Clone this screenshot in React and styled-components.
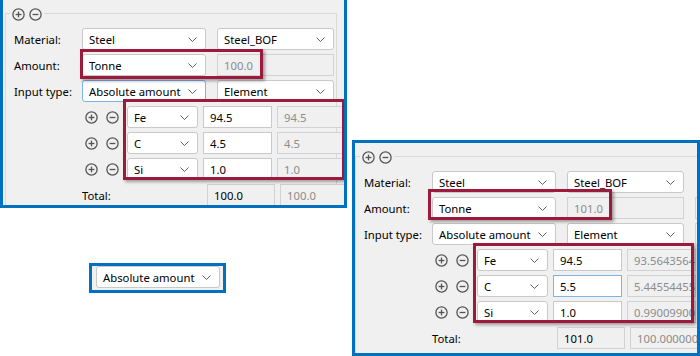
import React from "react";
import styled, { createGlobalStyle, css } from "styled-components";

const GlobalStyle = createGlobalStyle`
  html, body {
    margin: 0;
    padding: 0;
    background: #ffffff;
  }
  body {
    font-family: "Segoe UI", "Noto Sans", sans-serif;
    font-size: 11.3px;
    color: #000000;
  }
`;

const colors = {
  blue: "#0070c0",
  red: "#9c1a3c",
  panel: "#f0f0f0",
  line: "#d9d9d9",
  field: "#c9c9c9",
  disabledText: "#8c8c8c",
  focus: "#7fb2e5",
  icon: "#555555"
};

const Canvas = styled.div`
  display: flex;
  align-items: flex-start;
  width: 700px;
  height: 356px;
  overflow: hidden;
`;

const LeftColumn = styled.div`
  display: flex;
  flex-direction: column;
  width: 352px;
  flex-shrink: 0;
`;

const Panel = styled.div`
  position: relative;
  box-sizing: border-box;
  width: ${p => p.$width}px;
  height: ${p => p.$height}px;
  margin-top: ${p => p.$top}px;
  border: 3px solid ${colors.blue};
  background: ${colors.panel};
  overflow: hidden;
  padding-left: ${p => p.$inset}px;
  padding-top: 13px;
  flex-shrink: 0;
`;

const GroupBox = styled.div`
  box-sizing: border-box;
  width: ${p => p.$width}px;
  height: 260px;
  border: 1px solid ${colors.line};
  border-bottom: none;
`;

const Legend = styled.div`
  display: flex;
  gap: 4px;
  width: max-content;
  margin: -6px 0 0 4px;
  padding: 0 2px;
  background: ${colors.panel};
`;

const Form = styled.div`
  display: flex;
  flex-direction: column;
  gap: 4px;
  margin-top: 7px;
  padding-left: 8px;
`;

const Row = styled.div`
  display: flex;
  align-items: center;
  height: 22px;
  padding-left: ${p => p.$indent || 0}px;
`;

const Label = styled.span`
  width: ${p => p.$width || 68}px;
  flex-shrink: 0;
  white-space: nowrap;
`;

const fieldBase = css`
  box-sizing: border-box;
  height: 22px;
  flex-shrink: 0;
  display: flex;
  align-items: center;
  white-space: nowrap;
  overflow: hidden;
  margin-left: ${p => p.$gap || 0}px;
`;

const SelectBox = styled.div`
  ${fieldBase};
  width: ${p => p.$width}px;
  justify-content: space-between;
  padding: 0 8px 0 6px;
  background: #ffffff;
  border: 1px solid ${p => (p.$focused ? colors.focus : colors.field)};
  border-radius: 3px;
`;

const TextField = styled.div`
  ${fieldBase};
  width: ${p => p.$width}px;
  padding: 0 6px;
  background: ${p => (p.$disabled || p.$readOnly ? colors.panel : "#ffffff")};
  border: 1px solid
    ${p =>
      p.$focused ? colors.focus : p.$disabled || p.$readOnly ? "#d2d2d2" : colors.field};
  color: ${p => (p.$disabled ? colors.disabledText : "#000000")};
`;

const IconButton = styled.span`
  display: inline-flex;
  width: 13px;
  height: 13px;
  flex-shrink: 0;
  margin-left: ${p => p.$gap || 0}px;
`;

const Highlight = styled.div`
  position: absolute;
  box-sizing: border-box;
  left: ${p => p.$x}px;
  top: ${p => p.$y}px;
  width: ${p => p.$w}px;
  height: ${p => p.$h}px;
  border: 3px solid ${colors.red};
  box-shadow: 2px 2px 3px rgba(0, 0, 0, 0.35);
  pointer-events: none;
`;

const SmallFrame = styled.div`
  box-sizing: border-box;
  width: 137px;
  height: 30px;
  margin: 55px 0 0 89px;
  padding: 0 3px 0 4px;
  border: 3px solid ${colors.blue};
  background: ${colors.panel};
`;

const Chevron = () => (
  <svg width="9" height="5" viewBox="0 0 9 5">
    <polyline
      points="0.5,0.5 4.5,4.5 8.5,0.5"
      fill="none"
      stroke="#606060"
      strokeWidth="1"
    />
  </svg>
);

const CircleIcon = ({ plus }) => (
  <svg width="13" height="13" viewBox="0 0 13 13">
    <circle
      cx="6.5"
      cy="6.5"
      r="5.6"
      fill="none"
      stroke={colors.icon}
      strokeWidth="1.3"
    />
    <line x1="3.6" y1="6.5" x2="9.4" y2="6.5" stroke={colors.icon} strokeWidth="1.3" />
    {plus && (
      <line x1="6.5" y1="3.6" x2="6.5" y2="9.4" stroke={colors.icon} strokeWidth="1.3" />
    )}
  </svg>
);

const Select = ({ value, width, gap, focused }) => (
  <SelectBox $width={width} $gap={gap} $focused={focused}>
    <span>{value}</span>
    <Chevron />
  </SelectBox>
);

const ElementRow = ({ el, focused }) => (
  <Row $indent={71}>
    <IconButton>
      <CircleIcon plus />
    </IconButton>
    <IconButton $gap={8}>
      <CircleIcon />
    </IconButton>
    <Select value={el.name} width={71} gap={8} />
    <TextField $width={69} $gap={5} $focused={focused}>
      {el.value}
    </TextField>
    <TextField $width={69} $gap={5} $disabled>
      {el.share}
    </TextField>
  </Row>
);

const MaterialPanel = ({ data }) => (
  <Panel
    $width={data.width}
    $height={data.height}
    $top={data.top}
    $inset={data.inset}
  >
    <GroupBox $width={data.groupWidth}>
      <Legend>
        <IconButton>
          <CircleIcon plus />
        </IconButton>
        <IconButton>
          <CircleIcon />
        </IconButton>
      </Legend>
      <Form>
        <Row>
          <Label>Material:</Label>
          <Select value="Steel" width={124} />
          <Select value="Steel_BOF" width={117} gap={11} />
        </Row>
        <Row>
          <Label>Amount:</Label>
          <Select value="Tonne" width={124} />
          <TextField $width={117} $gap={11} $disabled>
            {data.amount}
          </TextField>
          {data.extra && <TextField $width={60} $gap={11} $disabled />}
        </Row>
        <Row>
          <Label>Input type:</Label>
          <Select value="Absolute amount" width={124} focused={data.focus === "type"} />
          <Select value="Element" width={117} gap={11} />
          {data.extra && <TextField $width={60} $gap={11} $disabled />}
        </Row>
        {data.elements.map(el => (
          <ElementRow key={el.name} el={el} focused={data.focus === el.name} />
        ))}
        <Row $indent={68}>
          <Label $width={125}>Total:</Label>
          <TextField $width={68} $readOnly>
            {data.total}
          </TextField>
          <TextField $width={80} $gap={5} $disabled>
            {data.totalShare}
          </TextField>
        </Row>
      </Form>
    </GroupBox>
    {data.highlights.map((h, i) => (
      <Highlight key={i} $x={h[0]} $y={h[1]} $w={h[2]} $h={h[3]} />
    ))}
  </Panel>
);

const before = {
  width: 347,
  height: 211,
  top: -3,
  inset: 2,
  groupWidth: 332,
  amount: "100.0",
  focus: "type",
  total: "100.0",
  totalShare: "100.0",
  elements: [
    { name: "Fe", value: "94.5", share: "94.5" },
    { name: "C", value: "4.5", share: "4.5" },
    { name: "Si", value: "1.0", share: "1.0" }
  ],
  highlights: [
    [77, 49, 183, 30],
    [120, 99, 222, 81]
  ]
};

const after = {
  width: 348,
  height: 216,
  top: 140,
  inset: 0,
  groupWidth: 420,
  extra: true,
  amount: "101.0",
  focus: "C",
  total: "101.0",
  totalShare: "100.000000000",
  elements: [
    { name: "Fe", value: "94.5", share: "93.56435643" },
    { name: "C", value: "5.5", share: "5.445544554" },
    { name: "Si", value: "1.0", share: "0.990099009" }
  ],
  highlights: [
    [73, 46, 184, 31],
    [118, 100, 221, 80]
  ]
};

export default function App() {
  return (
    <>
      <GlobalStyle />
      <Canvas>
        <LeftColumn>
          <MaterialPanel data={before} />
          <SmallFrame>
            <Select value="Absolute amount" width={124} />
          </SmallFrame>
        </LeftColumn>
        <MaterialPanel data={after} />
      </Canvas>
    </>
  );
}
